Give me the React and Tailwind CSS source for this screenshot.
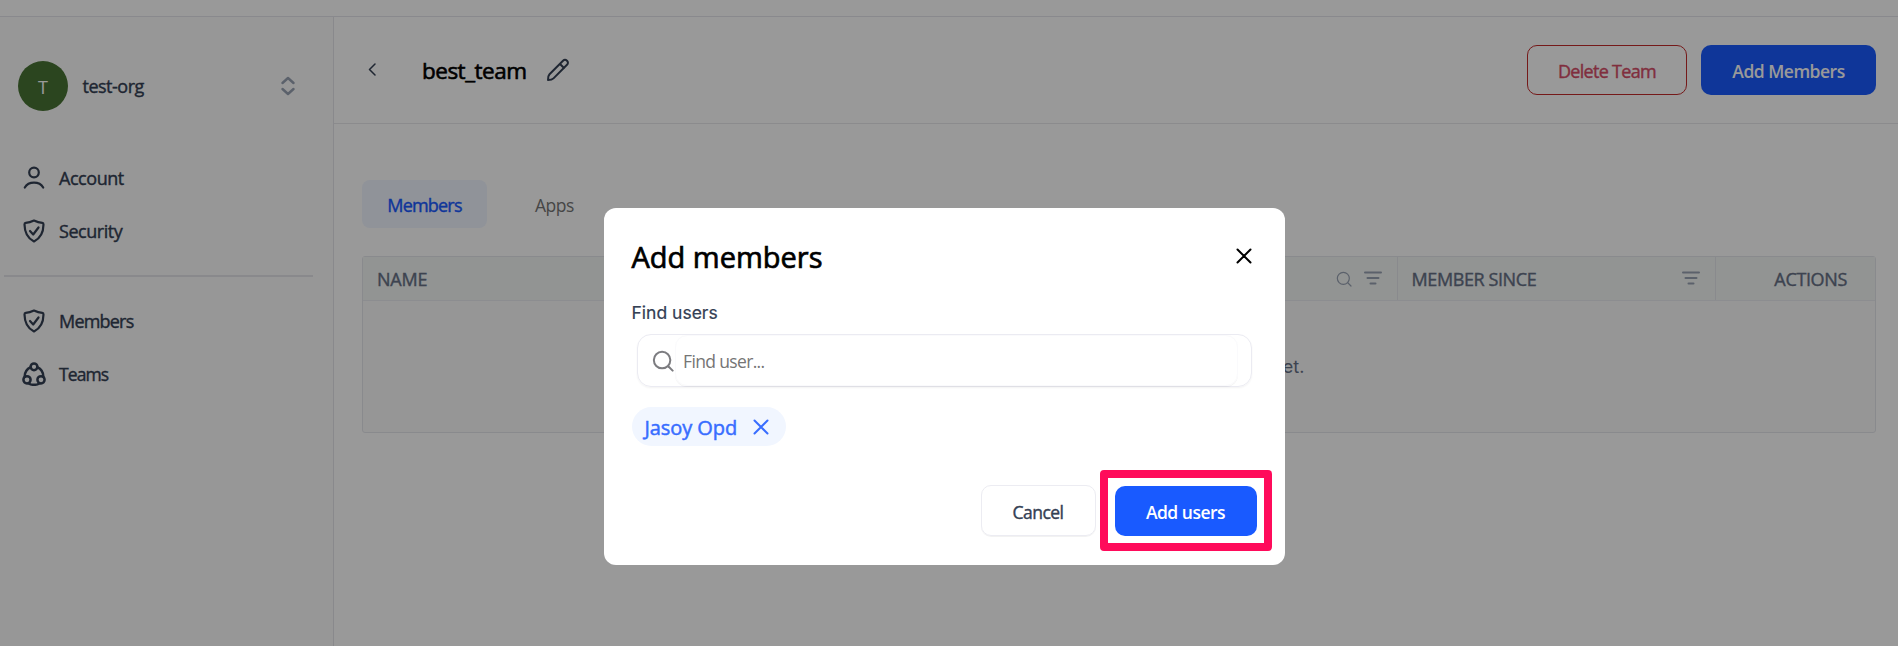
import { clsx } from "clsx";

const IconBase = ({ className, children, strokeWidth = 2, viewBox = "0 0 24 24" }) => (
  <svg viewBox={viewBox} className={clsx("shrink-0", className)} fill="none" stroke="currentColor" strokeWidth={strokeWidth} strokeLinecap="round" strokeLinejoin="round">
    {children}
  </svg>
);

const UserIcon = () => (
  <IconBase className="size-6 text-[#344054]" strokeWidth={2.2}>
    <circle cx="12" cy="6.5" r="4.8" />
    <path d="M2.8 21.500c1.800-3.200 5.200-4.900 9.200-4.900s7.400 1.700 9.200 4.900" />
  </IconBase>
);

const ShieldIcon = () => (
  <IconBase className="size-6 text-[#344054]" strokeWidth={2.2}>
    <path d="M12 1.500c2.800 1.400 5.600 2.200 8.300 2.400 1 .1 1.200.8 1.200 1.600-.1 8-2.500 13.500-9.500 17C5 19 2.600 13.500 2.500 5.500c0-.8.2-1.500 1.200-1.600C6.400 3.700 9.200 2.900 12 1.500Z" />
    <path d="m8 12 3.200 3.500 5.300-7" />
  </IconBase>
);

const TeamsIcon = () => (
  <IconBase className="size-6 text-[#344054]" strokeWidth={2.5}>
    <circle cx="12" cy="4.800" r="3.400" />
    <circle cx="5" cy="17.800" r="3.600" />
    <circle cx="19" cy="17.800" r="3.600" />
    <path d="M8.800 5.200C4.800 7 2.600 10.500 2.600 15M15.200 5.200c4 1.800 6.200 5.300 6.200 9.800M6.500 21.500c3.500 1.700 7.500 1.700 11 0" />
  </IconBase>
);

const SearchIcon = ({ className, strokeWidth }) => (
  <IconBase className={className} strokeWidth={strokeWidth}>
    <circle cx="11" cy="11" r="9" />
    <path d="m18 18 4.500 4.500" />
  </IconBase>
);

const FilterIcon = () => (
  <IconBase className="-mt-0.5 h-3.5 w-[18px] text-[#98a2b3]" viewBox="0 0 18 14">
    <path d="M1 1.500h16M3.500 7h11M6.500 12.500h5" />
  </IconBase>
);

const CloseIcon = ({ className }) => (
  <IconBase className={className} viewBox="0 0 16 16">
    <path d="m1.500 1.500 13 13M14.500 1.500l-13 13" />
  </IconBase>
);

const NavItem = ({ icon, label, className }) => (
  <div className="flex h-[53.500px] items-center gap-[13px] pl-[22px]">
    {icon}
    <span className={clsx("leading-6 text-[#344054] [-webkit-text-stroke:0.400px]", className)}>{label}</span>
  </div>
);

const Sidebar = () => (
  <aside className="flex w-[334px] shrink-0 flex-col border-r border-[#e4e4ea] bg-[#fcfcfc]">
    <div className="mt-11 flex h-[50px] items-center pl-[18px]">
      <div className="flex size-[50px] items-center justify-center rounded-full bg-[#487334] pt-px text-lg text-white">T</div>
      <span className="ml-[14.500px] pt-px text-[18px] tracking-[-0.500px] text-[#344054] [-webkit-text-stroke:0.400px]">test-org</span>
      <IconBase className="mr-[38.500px] ml-auto h-5 w-3.5 text-[#98a2b3]" viewBox="0 0 14 20" strokeWidth={2.4}>
        <path d="m1.500 7 5.500-5 5.500 5M1.500 13l5.500 5 5.500-5" />
      </IconBase>
    </div>
    <nav className="mt-10">
      <NavItem icon={<UserIcon />} label="Account" className="text-[18px] tracking-[-0.450px]" />
      <NavItem icon={<ShieldIcon />} label="Security" className="text-[18px] tracking-[-0.450px]" />
    </nav>
    <div className="mt-[17px] ml-1 h-0.5 w-[309px] bg-[#e4e4ea]" />
    <nav className="mt-[17px]">
      <NavItem icon={<ShieldIcon />} label="Members" className="text-[18px] tracking-[-0.800px]" />
      <NavItem icon={<TeamsIcon />} label="Teams" className="text-[17.500px] tracking-[-0.900px]" />
    </nav>
  </aside>
);

const TeamHeader = () => (
  <header className="flex h-[107px] items-center border-b border-[#e8e8ec] pr-[22px] pb-px pl-[34px]">
    <IconBase className="h-[13px] w-2 text-[#344054]" viewBox="0 0 8 13" strokeWidth={1.5}>
      <path d="M7 1 1.500 6.500 7 12" />
    </IconBase>
    <h1 className="ml-[46px] pt-0.5 text-[22.500px] tracking-[-0.500px] text-black [-webkit-text-stroke:0.600px]">best_team</h1>
    <IconBase className="ml-5 size-6 text-[#344054]">
      <path d="M2 22c0-3 .3-4.500 1.500-5.700L17 2.800c1.300-1.300 2.800-1.200 4 0s1.300 2.700 0 4L7.500 20.400C6.200 21.700 5 22 2 22ZM14 6l4 4" />
    </IconBase>
    <div className="ml-auto flex gap-3.5">
      <button className="h-[50px] w-40 rounded-[10px] border border-[#c42b2b] pt-[3px] text-[18px] tracking-[-0.700px] text-[#d64d68] [-webkit-text-stroke:0.400px]">Delete Team</button>
      <button className="h-[50px] w-[175px] rounded-[10px] bg-[#195aff] pt-[3px] text-[17.500px] font-semibold tracking-[-0.500px] text-white">Add Members</button>
    </div>
  </header>
);

const MembersTable = () => (
  <div className="mt-[28px] h-[177px] rounded-[3px] border border-[#e4e7ec] bg-[#fbfbfb] text-[#667085]">
    <div className="flex h-11 border-b border-[#eaecf0] bg-[#f4f7f5] text-[18px] [&_span]:[-webkit-text-stroke:0.400px]">
      <div className="flex flex-1 items-center border-r border-[#e4e7ec] pr-[15px] pl-3.5">
        <span className="pt-0.5 tracking-[-0.200px]">NAME</span>
        <SearchIcon className="ml-auto size-4 text-[#98a2b3]" strokeWidth={1.8} />
        <div className="ml-3"><FilterIcon /></div>
      </div>
      <div className="flex w-[318px] items-center justify-between border-r border-[#e4e7ec] pr-[15px] pl-[13.500px]">
        <span className="pt-0.5 tracking-[-0.400px]">MEMBER SINCE</span>
        <FilterIcon />
      </div>
      <div className="flex w-[159px] items-center justify-end pr-[28px]">
        <span className="pt-0.5 tracking-[-0.350px]">ACTIONS</span>
      </div>
    </div>
    <div className="flex h-[131px] items-center justify-center font-['Inter',sans-serif] text-lg">
      <span className="-ml-[22px]">There are no members added to this team yet.</span>
    </div>
  </div>
);

const AddMembersDialog = () => (
  <div className="absolute inset-0 bg-black/40">
    <section role="dialog" className="mt-[207.500px] ml-[603.500px] h-[357px] w-[681px] rounded-xl bg-white px-7 pt-[19.500px]">
      <div className="flex h-[57px] items-center justify-between pr-[5px]">
        <h2 className="pt-0.5 text-[29px] leading-10 text-black [-webkit-text-stroke:0.700px]">Add members</h2>
        <CloseIcon className="size-4 text-black" />
      </div>
      <label className="mt-[17px] block font-['Inter',sans-serif] text-[17.500px] leading-6 text-[#344054] [-webkit-text-stroke:0.200px]">Find users</label>
      <div className="mt-[9px] ml-[5px] flex h-[53px] w-[615.500px] items-center rounded-[14px] border border-[#ebebf2] shadow-xs">
        <SearchIcon className="ml-[14.500px] size-[22px] text-[#7c7c80]" strokeWidth={2.2} />
        <div className="ml-px flex h-[51px] w-[563px] items-center rounded-xl border border-[#fafafc] pt-0.5 pl-[7px] text-[17.500px] tracking-[-0.650px] text-[#757575] shadow-2xs">Find user...</div>
      </div>
      <div className="mt-5 flex h-[39px] w-[154px] items-center justify-between rounded-full bg-[#f1f6ff] pr-[17px] pl-[13px] text-[#386dff]">
        <span className="pt-[3px] text-[20px] tracking-[-0.080px] [-webkit-text-stroke:0.500px]">Jasoy Opd</span>
        <CloseIcon className="size-4" />
      </div>
      <div className="mt-[24px] -mr-[15px] flex items-center justify-end gap-1">
        <button className="h-[51px] w-[115px] rounded-[10px] border border-[#ececf2] pt-[3px] text-[17.500px] tracking-[-0.550px] text-[#344054] shadow-2xs [-webkit-text-stroke:0.400px]">Cancel</button>
        <div className="h-[81px] w-[172px] rounded-[4px] border-8 border-[#ff0b5b] px-[7px] pt-2">
          <button className="h-[50px] w-[142px] rounded-[10px] bg-[#195aff] pt-[3px] text-[17.500px] font-semibold tracking-[-0.500px] text-white">Add users</button>
        </div>
      </div>
    </section>
  </div>
);

export default function App() {
  return (
    <div className="relative flex h-[646px] w-[1898px] flex-col overflow-hidden bg-white font-['Open_Sans','Noto_Sans',sans-serif]">
      <div className="h-[17px] shrink-0 border-b border-[#e4e4ec]" />
      <div className="flex flex-1">
        <Sidebar />
        <main className="flex-1">
          <TeamHeader />
          <div className="pt-14 pr-[22px] pl-7">
            <div className="flex h-12 items-center text-[17.500px]">
              <span className="flex h-12 w-[125px] items-center justify-center rounded-lg bg-[#f0f5ff] pt-0.5 text-[18px] tracking-[-0.800px] text-[#195aff] [-webkit-text-stroke:0.400px]">Members</span>
              <span className="ml-12 pt-0.5 tracking-[-0.500px] text-[#757575]">Apps</span>
            </div>
            <MembersTable />
          </div>
        </main>
      </div>
      <AddMembersDialog />
    </div>
  );
}
